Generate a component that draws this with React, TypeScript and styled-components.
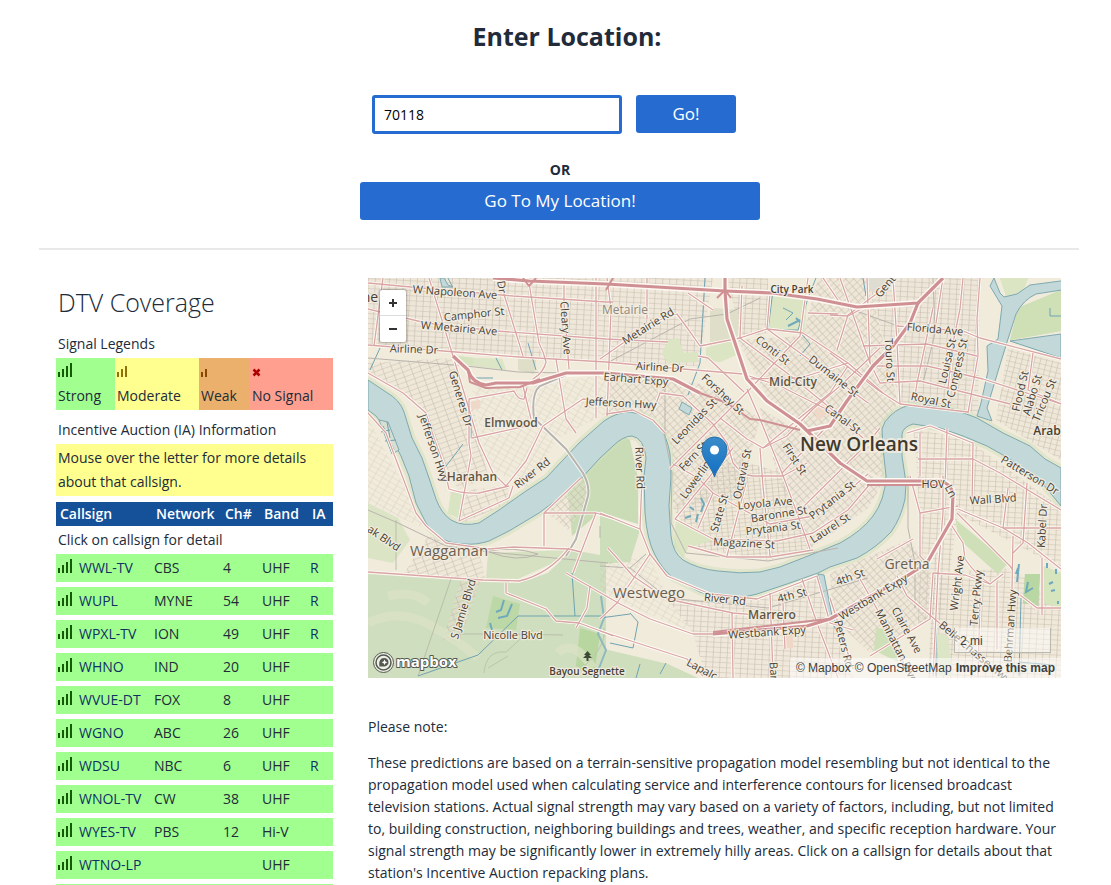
import React from "react";
import styled, { createGlobalStyle } from "styled-components";

const sans = `"Open Sans", "Noto Sans", sans-serif`;

const GlobalStyle = createGlobalStyle`
  *, *::before, *::after { box-sizing: border-box; }
  body {
    margin: 0;
    background: #fff;
    color: #212b3a;
    font-family: ${sans};
    font-size: 14px;
    line-height: 24px;
  }
`;

const Page = styled.main`
  margin: 0 32px 0 39px;
`;

const LocationForm = styled.form`
  display: flex;
  flex-direction: column;
  align-items: center;
  padding: 19px 0 28px 2px;
  border-bottom: 2px solid #e9e9e9;
`;

const FormTitle = styled.h2`
  margin: 0 0 42px 14px;
  font-size: 25px;
  line-height: 34px;
  font-weight: 700;
`;

const ZipRow = styled.div`
  display: flex;
  gap: 14px;
  margin: 0 12px 24px 0;
`;

const ZipInput = styled.input`
  width: 250px;
  height: 39px;
  padding: 0 9px;
  border: 3px solid #266bd0;
  border-radius: 3px;
  outline: none;
  background: #fff;
  color: #000;
  font: 14px ${sans};
`;

const BlueButton = styled.button<{ $wide?: boolean }>`
  width: ${(p) => (p.$wide ? "400px" : "100px")};
  max-width: 100%;
  height: 38px;
  padding: 0 0 2px;
  border: 0;
  border-radius: 3px;
  background: #266bd0;
  color: #fff;
  font: 500 17px ${sans};
  cursor: pointer;
`;

const OrText = styled.strong`
  font-weight: 700;
`;

const Columns = styled.div`
  display: grid;
  grid-template-columns: 277px minmax(0, 1fr);
  gap: 35px;
  padding: 28px 18px 0 17px;
`;

const CoverageTitle = styled.h1`
  margin: 6px 2px 12px;
  font-size: 25px;
  line-height: 36px;
  font-weight: 300;
`;

const Caption = styled.div`
  padding: 0 2px 2px;
`;

const Legend = styled.div`
  display: grid;
  grid-template-columns: 59px 84px 51px 1fr;
  margin-bottom: 8px;
`;

const LegendCell = styled.div<{ $bg: string }>`
  display: flex;
  flex-direction: column;
  height: 52px;
  padding: 2px;
  background: ${(p) => p.$bg};
`;

const LegendIcon = styled.span`
  display: flex;
  height: 24px;
  padding-top: 2px;
`;

const Notice = styled.div`
  margin-bottom: 6px;
  padding: 2px;
  background: #ffff8f;
`;

const Table = styled.table`
  width: 100%;
  table-layout: fixed;
  border-collapse: separate;
  border-spacing: 0;
`;

const HeadCell = styled.th<{ $w: number }>`
  width: ${(p) => p.$w}px;
  height: 24px;
  padding: 0 0 0 4px;
  background: #145198;
  color: #fff;
  font-weight: 600;
  text-align: left;
`;

const HintCell = styled.td`
  height: 28px;
  padding: 0 2px;
`;

const Cell = styled.td`
  height: 33px;
  padding: 0 2px;
  border-bottom: 5px solid #fff;
  background: #a1ff8f;
  white-space: nowrap;
`;

const CallCell = styled.div`
  display: flex;
  align-items: flex-start;
  gap: 6px;

  svg { margin-top: 2px; }
`;

const CellLink = styled.a`
  color: #0f2f66;
  text-decoration: none;
`;

const MapBox = styled.section`
  position: relative;
  height: 400px;
  overflow: hidden;
  background: #f1ebdc;
`;

const MapSvg = styled.svg`
  display: block;
  width: 100%;
  height: 400px;
  font-family: ${sans};
`;

const ZoomControl = styled.div`
  position: absolute;
  top: 12px;
  left: 12px;
  border-radius: 2px;
  background: #fff;
  box-shadow: 0 0 2px 1px rgba(0, 0, 0, 0.28);
`;

const ZoomButton = styled.button`
  display: flex;
  align-items: center;
  justify-content: center;
  width: 26px;
  height: 26px;
  padding: 0;
  border: 0;
  background: transparent;
  cursor: pointer;

  &:first-child { border-bottom: 1px solid #ddd; }
`;

const Scale = styled.div`
  position: absolute;
  right: 10px;
  bottom: 25px;
  width: 97px;
  height: 25px;
  padding: 0 5px;
  border: 1px solid #b9b9b0;
  border-top: 0;
  background: rgba(255, 255, 255, 0.45);
  color: #404040;
  font: 12px/26px "Liberation Sans", Arial, sans-serif;
`;

const Attribution = styled.div`
  position: absolute;
  right: 0;
  bottom: 0;
  display: flex;
  gap: 4px;
  height: 20px;
  padding: 0 6px;
  background: rgba(255, 255, 255, 0.5);
  color: #404040;
  font: 12px/20px "Liberation Sans", Arial, sans-serif;
  white-space: nowrap;
`;

const AttributionLink = styled.a<{ $bold?: boolean }>`
  color: inherit;
  font-weight: ${(p) => (p.$bold ? 700 : 400)};
  text-decoration: none;
`;

const Note = styled.p`
  margin: 0 0 14px;
  line-height: 22px;
`;

const Notes = styled.div`
  padding-top: 38px;
`;

function Bars({ count, color }: { count: number; color: string }) {
  return (
    <svg width="15" height="16" viewBox="0 0 15 16" aria-hidden="true" shapeRendering="crispEdges">
      {[5, 8, 11, 14].slice(0, count).map((h, i) => (
        <rect key={h} x={i * 4} y={15 - h} width="2" height={h} fill={color} />
      ))}
    </svg>
  );
}

type Station = [string, string, string, string, string];
const stations: Station[] = [
  ["WWL-TV", "CBS", "4", "UHF", "R"],
  ["WUPL", "MYNE", "54", "UHF", "R"],
  ["WPXL-TV", "ION", "49", "UHF", "R"],
  ["WHNO", "IND", "20", "UHF", ""],
  ["WVUE-DT", "FOX", "8", "UHF", ""],
  ["WGNO", "ABC", "26", "UHF", ""],
  ["WDSU", "NBC", "6", "UHF", "R"],
  ["WNOL-TV", "CW", "38", "UHF", ""],
  ["WYES-TV", "PBS", "12", "Hi-V", ""],
  ["WTNO-LP", "", "", "UHF", ""],
  ["", "", "", "", ""],
];

const river =
  "M0 102L18 114Q32 122 36 134L44 160 54 180 61 200 68 221Q73 235 83 242 95 249 111 245L131 232 158 213 178 200 194 183 211 165 236 143Q249 134 262 134 280 137 290 146 299 158 302 176L303 198 301 228 303 258Q305 275 315 282 330 291 350 293 372 296 392 294L412 289 445 276 472 265Q494 253 505 238 517 222 518 198L515 170 514 151Q516 143 522 138 532 128 545 127L562 128 585 131 609 140 635 155 662 168 677 181 693 190V228L675 206 662 198 642 181 619 168 595 158 572 150 545 146Q535 149 534 156L534 178 538 205 537 221Q533 240 523 254 508 270 489 280L462 289 450 295 419 306 389 316Q377 320 365 319 347 319 332 314L305 300Q294 291 287 277 279 262 277 235L276 198 278 180Q276 160 264 158 255 158 245 168L232 180 211 203 198 215 171 235 141 253 121 263Q108 267 98 266 84 266 75 261 64 255 58 245L48 225 41 198 33 178 21 155 8 138 0 132Z";

const urban: [string, string, string][] = [
  ["g0", "#e9dfd3", "M0 0H131L150 77 0 66Z"],
  ["g0", "#ece3d6", "M131 0H345L330 88 150 78Z"],
  ["g60", "#ece2d5", "M0 85L85 80 108 140 120 200 90 212 74 180 55 130 0 95Z"],
  ["g30", "#efe8d9", "M104 110L165 108 240 96 238 136 190 160 160 210 120 190Z"],
  ["g45", "#ece3d5", "M240 95L332 106 392 140 372 220 305 230 304 170 290 140 238 136Z"],
  ["g0", "#e9dfd2", "M360 0H400V55L372 60Z"],
  ["g45", "#e9e0d2", "M370 62L435 58 450 0H500L530 125 515 150 516 200 470 180 400 120Z"],
  ["g0", "#e9e0d3", "M500 0H612L610 135 532 124Z"],
  ["g15", "#ebe2d5", "M640 70L693 85V182L628 142Z"],
  ["g45", "#ece3d6", "M392 130L515 205 500 230 440 272 410 200Z"],
  ["g8", "#ebe2d5", "M305 230L365 180 414 195 442 270 400 282 330 270Z"],
  ["g0", "#eee6d8", "M545 150L600 162 693 230V290L590 236 575 340 550 345V200Z"],
  ["g45", "#ebe2d5", "M462 295L540 262 562 290 560 340 502 375 465 340Z"],
  ["g0", "#eee6d9", "M300 322L390 322 450 300 485 400H338L325 355Z"],
  ["g30", "#ede5d7", "M232 285L282 278 300 322 325 355 232 315Z"],
  ["g0", "#ede5d8", "M565 295L645 290 693 330V400H560Z"],
  ["g60", "#ece2d5", "M60 258L110 272 118 302 35 297Z"],
  ["g60", "#eadfd3", "M92 303L112 303 92 364 75 362Z"],
  ["g60", "#ede3d5", "M82 214L140 208 140 225 93 246Z"],
  ["g30", "#f0e8da", "M0 140L40 215 60 252 0 225Z"],
  ["g45", "#efe6d8", "M176 232L215 200 222 218 200 252Z"],
];

const greens: [string, string][] = [
  ["#cfdebe", "M0 296L115 304 151 305 180 295 204 272 238 278V400H0Z"],
  ["#dce4c6", "M0 225L30 240 42 262 25 285 0 280Z"],
  ["#d6e1c2", "M120 275L200 272 185 285 150 301 118 300Z"],
  ["#bcd8a6", "M125 318L152 326 148 352 118 350Z"],
  ["#c9dcb5", "M198 200L236 148 262 162 270 200 270 246 232 234 204 258Z"],
  ["#cddebb", "M232 235L272 252 262 284 232 286Z"],
  ["#b8d6a0", "M212 350L232 356 226 398 208 388Z"],
  ["#cfdfbd", "M232 370L300 386 330 400H232Z"],
  ["#dbe5c4", "M400 15L440 18 436 54 400 51Z"],
  ["#dbe5c4", "M300 62L310 60 316 75 330 74V84L300 85 294 76Z"],
  ["#dbe5c4", "M338 70L366 62 370 76 352 84 338 82Z"],
  ["#dfdec9", "M342 30L370 32 370 58 342 68Z"],
  ["#cfe0b6", "M650 30L693 12V53L642 62Z"],
  ["#dbe5c4", "M632 0H660L655 14 638 18Z"],
  ["#cfe0b8", "M588 242L640 285 630 296 590 260Z"],
  ["#b9d7a3", "M657 296L672 296 670 328 655 325Z"],
  ["#d7e5bf", "M675 288L693 295V330L676 325Z"],
  ["#cfe0b8", "M508 350L524 352 530 384 506 372Z"],
  ["#dbe5c4", "M308 242L345 262 320 270 315 280 306 268Z"],
  ["#d8e4c2", "M83 215L95 214 94 242 80 235Z"],
  ["#d6e3bf", "M90 78L106 80V88L96 86Z"],
  ["#dfdec9", "M150 81L168 82 166 96 150 92Z"],
  ["#dde5c7", "M106 80L134 81 138 92 104 88Z"],
  ["#dde5c7", "M568 355L580 358 585 398H572Z"],
  ["#dfdcd1", "M500 0H520L512 16 500 12Z"],
  ["#f0d8c8", "M444 130L456 122 462 134 450 142Z"],
  ["#f0d8c8", "M418 358H425V370H418Z"],
  ["#f0d8c8", "M102 124L112 122V130L104 132Z"],
];

const streets = [
  "M0 5L43 9 145 18 238 24H245", "M0 31L58 45 128 53 238 61 300 64", "M0 67L88 74 151 79 238 84 315 91 375 96 412 108 472 138",
  "M61 0L85 78 101 131 111 165 125 195 138 208", "M131 0L155 78", "M161 5L171 65Q176 75 178 84 176 94 165 101", "M155 108L163 141",
  "M15 0L6 68", "M101 121L146 113Q150 122 156 121L159 110", "M104 160L163 147", "M138 208L158 183 175 148 215 121 228 122", "M188 81L198 141 208 155", "M196 0V25L201 91",
  "M228 0V140", "M0 95L35 115 58 135 66 160 75 185 81 211Q95 216 111 215L141 208", "M101 121V165L103 178 91 243 141 220 145 208",
  "M0 135L18 155 38 208 48 235 58 248 78 265 121 271 145 269 201 271 213 274", "M0 294L115 302 151 303Q181 296 201 270", "M138 305V315L178 331 188 343 211 345 238 355 245 358",
  "M198 295L238 318 252 326 282 341 325 356 347 356", "M176 235V268", "M176 235H228L245 240", "M228 235L205 295", "M176 235L213 200",
  "M222 308L219 330 208 350", "M232 235L272 251 282 276 299 298 342 316 389 321 449 298", "M274 200L272 251", "M282 276L249 325 232 341",
  "M232 353L319 381 335 398", "M240 270L265 298 299 321 365 335 400 338", "M364 335L365 400", "M402 315L405 398", "M415 325L417 371", "M434 301L449 345 470 400",
  "M239 0L243 31 239 138", "M279 0V41", "M232 81L255 65 282 45 309 36 320 51 332 68 372 60 399 51 435 55", "M320 15L345 32",
  "M238 136L265 132 285 142 297 155", "M292 115L315 118 345 146 359 165 365 185Q375 198 385 198H415L439 185", "M302 191L382 111 432 58 440 0", "M292 115L285 134",
  "M330 78L340 80 376 114", "M352 140L379 161 395 170 419 158 445 131 472 108 512 70", "M379 111L392 141 414 195 429 235 442 271", "M392 170L395 208 402 278", "M378 205L359 278",
  "M305 186L330 200 345 215 372 230 402 246 445 238 472 220 500 196", "M307 241L345 261 409 263 445 255 480 232 502 206", "M320 268L359 279 402 279 445 272", "M307 241L365 170", "M330 250L345 215",
  "M372 60L419 95 472 138 500 165", "M399 51L450 88 500 125", "M435 55L480 85 515 115", "M372 60L374 8", "M399 51L402 15", "M440 35L470 36", "M455 0L472 25",
  "M379 101L432 100 480 85", "M395 170L462 115 480 88", "M414 195L472 135 505 88", "M429 235L500 165 512 150",
  "M469 72L480 37 530 0", "M472 0L502 85 512 105", "M462 37L480 38 499 28", "M499 0L502 85", "M525 0L529 65 532 126", "M529 48L595 53 612 60 693 81",
  "M495 68L559 66 609 78", "M512 105L552 103 642 126", "M509 88L559 88 615 101 693 126", "M565 30L549 105 546 124", "M532 126L600 134", "M612 0L609 41 610 78 600 135", "M595 0L592 31 585 65 580 110", "M575 0L568 45",
  "M462 75L510 112 532 126", "M665 75L660 112 693 126", "M542 198L552 235V278L559 285", "M539 155L562 148 605 165", "M579 150L577 208", "M550 181H605L632 195 693 232", "M552 155V198",
  "M605 165L604 228", "M552 235L590 228", "M575 198V235L570 295 565 398", "M590 231L635 250 660 265 693 291", "M589 235L642 288 645 292", "M645 258L644 311 669 330H693", "M659 205L655 265 645 275", "M635 250H693", "M635 250L640 210",
  "M582 245L595 265 597 281Q608 297 622 306L635 296", "M629 305V371", "M565 295L562 341 502 378", "M565 295L597 297 622 306", "M529 298L539 318 575 348 635 398", "M492 301L509 331 542 398", "M462 320L485 391", "M509 281L545 261", "M674 280V337", "M612 320L610 398",
  "M449 298L462 345 485 352",
];

const motorways = [
  "M125 0L161 3 238 6 357 13 405 15 449 21 489 29 550 25 575 0", "M550 25L542 45 525 68 505 88 479 123 462 148 439 153",
  "M357 0V13L359 41 369 71 379 101 399 123 432 146 472 185 499 203H572Q582 205 585 215L584 241 559 285 539 298 462 341 439 348 345 356",
  "M85 78L100 92Q104 105 118 107L128 105H165L198 95 238 95 305 101 332 115",
];

const thinMotorways = ["M332 115L359 125 382 141 392 142 432 152", "M499 207H572", "M100 92L102 104 118 110 152 109 172 101", "M345 354L460 341", "M155 0L161 8 168 0", "M238 12L245 0", "M349 20L357 12 363 20"];

const rails = [
  "M0 80L98 88 150 94 198 95 238 95", "M239 85L322 41 359 36 392 20", "M0 232L30 245 78 268 121 274 175 279 240 285", "M121 273Q145 268 170 276 150 285 121 274",
  "M297 110V160L304 195 303 245 318 275 400 283 470 270", "M480 30L530 48 600 54", "M565 0L567 55 555 105", "M232 288L262 290 278 276", "M262 290L300 320 400 330 500 300",
  "M540 198V250L547 285V330", "M232 248L232 260",
];

const creeks = [
  "M337 0L332 85 320 117", "M107 100H125", "M160 65L168 92", "M128 80L134 92", "M12 70L2 92", "M95 166L75 192", "M103 148V160",
  "M50 398L110 377 150 338H238", "M204 295L207 338", "M405 12L400 52H430L440 20 448 0", "M432 54L442 66 432 78", "M415 30L425 35 418 42",
  "M495 0L498 18", "M682 30V38H693", "M568 341V398", "M653 320L651 398", "M232 340L262 336", "M262 335L270 344 265 370 242 365", "M651 384L685 387", "M80 0L84 8",
  "M268 400L272 386", "M292 396L298 385",
];

const parkPonds = [
  "M136 322L133 332 128 334", "M144 326L139 338 130 340", "M122 345L124 352", "M333 220L336 226 333 234M330 236L328 244M317 240L323 238M322 229L326 232",
  "M651 286L649 304M648 296L650 290M660 304L658 314 665 310", "M679 285V290M688 291V296M681 306L685 304M683 313L687 312M690 323V326", "M428 40L434 46M420 48L432 42",
];

type Label = [string, number, number, number, number?, number?, string?];
const labels: Label[] = [
  ["W Napoleon Ave", 87, 14, 4], ["Camphor St", 106, 36, -6], ["W Metairie Ave", 91, 50, 5], ["Airline Dr", 46, 71, 2], ["Dr", 134, 9, 80], ["Cleary Ave", 198, 50, 86],
  ["Generes Dr", 93, 121, 73], ["Jefferson Hwy", 66, 170, 71], ["River Rd", 164, 195, -38], ["Jefferson Hwy", 253, 125, 3], ["Metairie Rd", 280, 48, -32],
  ["Airline Dr", 292, 89, 3], ["Earhart Expy", 268, 101, 5], ["Forshey St", 355, 116, 43], ["Leonidas St", 326, 143, -46], ["Fern St", 325, 178, -47], ["Lowerline", 329, 199, -54],
  ["River Rd", 272, 190, 88], ["Conti St", 405, 72, 38], ["Dumaine St", 466, 98, 38], ["Genti", 518, 7, -50], ["Florida Ave", 567, 51, 5], ["Touro St", 522, 82, 87],
  ["Louisa St", 579, 83, -77], ["Congress St", 589, 90, -77], ["Royal St", 563, 122, 12], ["Flood St", 652, 113, -77], ["Alabo St", 664, 117, -73], ["Tricou St", 676, 122, -67],
  ["Canal St", 475, 141, 36], ["First St", 427, 181, 57], ["Octavia St", 374, 196, -78], ["State St", 351, 235, -74], ["Loyola Ave", 397, 225, -5], ["Baronne St", 411, 236, -9],
  ["Prytania St", 405, 250, -7], ["Magazine St", 376, 265, 3], ["Prytania St", 464, 222, -38], ["Laurel St", 462, 250, -33], ["HOV", 565, 206, 0], ["Ln", 583, 213, 62], ["Wall Blvd", 625, 221, -4],
  ["Patterson Dr", 662, 197, 31], ["Kabel Dr", 674, 248, -87], ["4th St", 482, 299, -20], ["4th St", 424, 317, -14], ["Westbank Expy", 399, 354, -4], ["Westbank Expy", 505, 319, -31],
  ["River Rd", 357, 321, 6], ["ak Blvd", 16, 260, 34], ["S Jamie Blvd", 95, 331, -73], ["Nicolle Blvd", 145, 357, 0], ["Lapalc", 334, 391, 28], ["Bar", 406, 393, 87],
  ["Peters Rd", 476, 366, 76], ["Manhattan Blvd", 529, 368, 63], ["Claire Ave", 539, 352, 61], ["Wright Ave", 589, 305, -83], ["Terry Pkwy", 608, 320, -85], ["Behrman Hwy", 642, 348, -86], ["Belle Chasse Hwy", 607, 374, 40],
  ["ne", 2, 19, 0, 14], ["Elmwood", 143, 145, 0, 12, 600, "#5f5543"], ["Harahan", 104, 199, 0, 12, 600, "#5f5543"], ["Metairie", 257, 32, 0, 12, 400, "#91887b"], ["City Park", 424, 12, 0, 10, 600],
  ["Mid-City", 425, 104, 0, 12, 600, "#5f5543"], ["Arab", 679, 153, 0, 12, 600], ["New Orleans", 491, 167, 0, 19, 600, "#3f3a2e"], ["Gretna", 539, 286, 0, 14, 400, "#6a6050"],
  ["Marrero", 404, 337, 0, 12, 600, "#5f5543"], ["Westwego", 281, 315, 0, 15, 400, "#6a6050"], ["Waggaman", 81, 273, 0, 15, 400, "#6a6050"], ["Bayou Segnette", 219, 394, 0, 10, 600],
];

const grids: [string, number, number, number][] = [
  ["g0", 3, 7, 5], ["g8", -5, 6, 4], ["g15", 14, 6, 5], ["g30", 30, 8, 5], ["g45", -42, 6, 5], ["g60", -20, 9, 5],
];

function CityMap() {
  return (
    <MapSvg viewBox="0 0 693 400" preserveAspectRatio="xMidYMid slice" role="img" aria-label="Map of New Orleans">
      <defs>
        {grids.map(([id, angle, w, h]) => (
          <pattern key={id} id={id} width={w} height={h} patternUnits="userSpaceOnUse" patternTransform={`rotate(${angle})`}>
            <path d={`M0 0H${w}M0 0V${h}`} stroke="#bdb3a4" strokeWidth="1.2" fill="none" />
          </pattern>
        ))}
        <linearGradient id="pin" x1="0" y1="0" x2="0" y2="1">
          <stop offset="0" stopColor="#3a8cc8" />
          <stop offset="1" stopColor="#126fc6" />
        </linearGradient>
      </defs>
      <rect width="693" height="400" fill="#f1ebdc" />
      {greens.map(([fill, d]) => <path key={d} d={d} fill={fill} />)}
      {urban.map(([grid, fill, d]) => (
        <g key={d}>
          {grid !== "g30" && <path d={d} fill={fill} opacity="0.35" />}
          <path d={d} fill={`url(#${grid})`} opacity={grid === "g30" ? 0.4 : 0.8} />
        </g>
      ))}
      {greens.slice(8).map(([fill, d]) => <path key={d} d={d} fill={fill} />)}
      <path d="M0 345Q30 330 60 346T110 380M190 375Q205 360 225 390M20 318Q45 312 60 325" fill="none" stroke="#dbe3c6" strokeWidth="9" opacity="0.7" />
      <path d="M84 298L50 398M28 242V292M88 356H130L195 357" fill="none" stroke="#b9bfaa" strokeWidth="1" />
      <path d="M116 395Q118 372 138 374 152 360 165 352M140 378L120 390M205 398Q240 370 236 350" fill="none" stroke="#bac7ab" strokeWidth="1" />
      <path d={river} fill="none" stroke="#cfdfba" strokeWidth="7" strokeLinejoin="round" opacity="0.5" />
      <path d={river} fill="#c3d8d8" stroke="#7fa9b0" strokeWidth="1" />
      <g fill="#c3d8d8" stroke="#7fa9b0" strokeWidth="1">
        <path d="M622 8L626 0 632 15 636 19 649 16 662 7 700 2V11L668 16Q655 22 648 36L640 61 631 90 619 130 624 143 609 138 613 125 620 93 619 68 630 61 634 28Z" />
        <path d="M642 63L693 56V80Z" />
        <path d="M11 142L20 144 31 172 24 176Z" fill="#d8dfd0" />
        <path d="M314 124L324 130 321 137 311 131Z" />
        <path d="M450 296L456 297 464 338 474 352 468 352 458 332Z" />
        <path d="M72 0L76 0 80 7 85 9 74 9Z" />
      </g>
      <path d="M233 318L236 340 230 356 238 372 228 398" fill="none" stroke="#8fb9bf" strokeWidth="2" />
      <path d="M15 148L26 172M19 144L22 160M13 154L22 152M17 163L28 162" fill="none" stroke="#6f9fae" />
      <g fill="none" stroke="#6fa3b1" strokeWidth="1">{creeks.map((d) => <path key={d} d={d} />)}</g>
      <g fill="none" stroke="#6fa9bd" strokeWidth="2">{parkPonds.map((d) => <path key={d} d={d} />)}</g>
      <g fill="none" stroke="#b9b4ad" strokeWidth="1">{rails.map((d) => <path key={d} d={d} />)}</g>
      <path d="M238 95L198 97 172 108Q163 115 166 140L198 171 215 195Q222 208 220 218L208 261 198 278" fill="none" stroke="#fff" strokeWidth="4" opacity="0.7" />
      <path d="M238 95L198 97 172 108Q163 115 166 140L198 171 215 195Q222 208 220 218L208 261 198 278" fill="none" stroke="#b9b3ad" strokeWidth="2" />
      <g fill="none" stroke="#fffdf7" strokeWidth="3" strokeLinejoin="round">{streets.map((d) => <path key={d} d={d} />)}</g>
      <g fill="none" stroke="#d9a5a4" strokeWidth="1.3" strokeLinejoin="round">{streets.map((d) => <path key={d} d={d} />)}</g>
      <g fill="none" stroke="#fff9f4" strokeWidth="6" strokeLinejoin="round">{motorways.map((d) => <path key={d} d={d} />)}</g>
      <g fill="none" stroke="#cf9093" strokeWidth="2" strokeLinejoin="round">{thinMotorways.map((d) => <path key={d} d={d} />)}</g>
      <g fill="none" stroke="#cf9093" strokeWidth="3.2" strokeLinejoin="round">{motorways.map((d) => <path key={d} d={d} />)}</g>
      <g textAnchor="middle">
        {labels.map(([text, x, y, angle, size = 11, weight = 400, color = "#473f35"]) => (
          <text
            key={`${text}${x}`}
            transform={`translate(${x} ${y}) rotate(${angle})`}
            y={Math.round(size / 3)}
            fontSize={size}
            fontWeight={weight}
            fill={color}
            stroke="#f4eee2"
            strokeOpacity="0.85"
            strokeWidth={size > 16 ? 4 : 2.5}
            strokeLinejoin="round"
            paintOrder="stroke"
          >
            {text}
          </text>
        ))}
      </g>
      <path d="M219.500 373L216 377H218L215 380H218.500V383H220.500V380H224L221 377H223Z" fill="#3d4a34" />
      <path d="M346.500 199C344 189 334 182 334 171.500A12.500 12.500 0 0 1 359 171.500C359 182 349 189 346.500 199Z" fill="url(#pin)" stroke="#2a6ea8" strokeWidth="1" />
      <circle cx="346.500" cy="172" r="4.500" fill="#fff" />
      <g stroke="#55594f" fill="#fff">
        <circle cx="15.500" cy="384.500" r="10" fill="#eef1e8" strokeWidth="1" />
        <circle cx="15.500" cy="384.500" r="7.500" fill="none" strokeWidth="1.500" />
        <path d="M11.500 388.500C10.500 383 12.500 380 16 380A4 4 0 0 1 16.500 388.500Z" fill="#55594f" stroke="none" />
        <path d="M16.500 381.500L17.400 383.400 19.300 384.300 17.400 385.200 16.500 387.100 15.600 385.200 13.700 384.300 15.600 383.400Z" stroke="none" />
        <text x="28" y="389" fontSize="15" fontWeight="700" strokeWidth="2" strokeLinejoin="round" paintOrder="stroke">mapbox</text>
      </g>
    </MapSvg>
  );
}

export default function App() {
  return (
    <>
      <GlobalStyle />
      <Page>
        <LocationForm onSubmit={(e) => e.preventDefault()}>
          <FormTitle><label htmlFor="zip">Enter Location:</label></FormTitle>
          <ZipRow>
            <ZipInput id="zip" type="text" defaultValue="70118" />
            <BlueButton type="submit">Go!</BlueButton>
          </ZipRow>
          <OrText>OR</OrText>
          <BlueButton type="button" $wide>Go To My Location!</BlueButton>
        </LocationForm>
        <Columns>
          <section>
            <CoverageTitle>DTV Coverage</CoverageTitle>
            <Caption>Signal Legends</Caption>
            <Legend>
              <LegendCell $bg="#a1ff8f"><LegendIcon><Bars count={4} color="#145a08" /></LegendIcon>Strong</LegendCell>
              <LegendCell $bg="#ffff8f"><LegendIcon><Bars count={3} color="#927208" /></LegendIcon>Moderate</LegendCell>
              <LegendCell $bg="#ebb06c"><LegendIcon><Bars count={2} color="#8a4700" /></LegendIcon>Weak</LegendCell>
              <LegendCell $bg="#ff9f8f">
                <LegendIcon>
                  <svg width="9" height="16" viewBox="0 0 9 16" aria-hidden="true">
                    <path d="M1.500 7.500L7.500 13.500M7.500 7.500L1.500 13.500" stroke="#ab0000" strokeWidth="2.500" />
                  </svg>
                </LegendIcon>
                No Signal
              </LegendCell>
            </Legend>
            <Caption>Incentive Auction (IA) Information</Caption>
            <Notice>Mouse over the letter for more details about that callsign.</Notice>
            <Table>
              <thead>
                <tr>
                  <HeadCell $w={96}>Callsign</HeadCell>
                  <HeadCell $w={69}>Network</HeadCell>
                  <HeadCell $w={39}>Ch#</HeadCell>
                  <HeadCell $w={48}>Band</HeadCell>
                  <HeadCell $w={25}>IA</HeadCell>
                </tr>
              </thead>
              <tbody>
                <tr><HintCell colSpan={5}>Click on callsign for detail</HintCell></tr>
                {stations.map(([call, network, channel, band, ia], i) => (
                  <tr key={i}>
                    <Cell>
                      <CallCell>
                        <Bars count={4} color="#145a08" />
                        <CellLink href="#">{call}</CellLink>
                      </CallCell>
                    </Cell>
                    <Cell>{network}</Cell>
                    <Cell>{channel}</Cell>
                    <Cell>{band}</Cell>
                    <Cell>{ia && <CellLink href="#">{ia}</CellLink>}</Cell>
                  </tr>
                ))}
              </tbody>
            </Table>
          </section>
          <section>
            <MapBox>
              <CityMap />
              <ZoomControl>
                <ZoomButton type="button" aria-label="Zoom in">
                  <svg width="8" height="8" viewBox="0 0 8 8"><path d="M4 0V8M0 4H8" stroke="#333" strokeWidth="2" /></svg>
                </ZoomButton>
                <ZoomButton type="button" aria-label="Zoom out">
                  <svg width="8" height="8" viewBox="0 0 8 8"><path d="M0 4H8" stroke="#333" strokeWidth="2" /></svg>
                </ZoomButton>
              </ZoomControl>
              <Scale>2 mi</Scale>
              <Attribution>
                <AttributionLink href="#">© Mapbox</AttributionLink>
                <AttributionLink href="#">© OpenStreetMap</AttributionLink>
                <AttributionLink href="#" $bold>Improve this map</AttributionLink>
              </Attribution>
            </MapBox>
            <Notes>
              <Note>Please note:</Note>
              <Note>
                These predictions are based on a terrain-sensitive propagation model resembling but not identical to the
                propagation model used when calculating service and interference contours for licensed broadcast television
                stations. Actual signal strength may vary based on a variety of factors, including, but not limited to,
                building construction, neighboring buildings and trees, weather, and specific reception hardware. Your signal
                strength may be significantly lower in extremely hilly areas. Click on a callsign for details about that
                station's Incentive Auction repacking plans.
              </Note>
            </Notes>
          </section>
        </Columns>
      </Page>
    </>
  );
}
